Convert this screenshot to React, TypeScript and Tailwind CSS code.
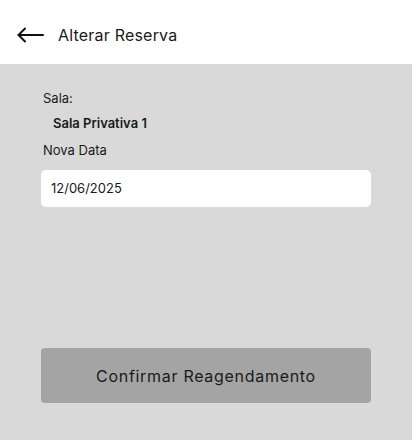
const font = { fontFamily: "Inter, 'Noto Sans', sans-serif" }

export default function App() {
  return (
    <div className="flex flex-col w-[412px] h-[440px] bg-[#d9d9d9] text-[#1a1a1a]" style={font}>
      <header className="flex items-center h-16 bg-white pl-[17px] pt-[6px] gap-[14px]">
        <svg width="27" height="16" viewBox="0 0 27 16" fill="none" stroke="#111" strokeWidth="2" strokeLinecap="round" strokeLinejoin="round">
          <path d="M26 8H1.5" />
          <path d="M8 1.5L1.5 8L8 14.5" />
        </svg>
        <h1 className="text-[16px] font-normal tracking-[0.2px]">Alterar Reserva</h1>
      </header>

      <main className="flex flex-col flex-1 px-[41px] pt-[26px] pb-[37px]">
        <span className="pl-[2px] text-[13px] leading-[16px]">Sala:</span>
        <span className="pl-[12px] mt-[9px] text-[13px] leading-[16px] font-semibold">
          Sala Privativa 1
        </span>
        <label className="pl-[2px] mt-[11px] text-[13px] leading-[16px]">Nova Data</label>
        <div className="mt-[12px] h-[37px] flex items-center bg-white rounded-[5px] px-[10px] text-[13px]">
          12/06/2025
        </div>

        <button className="mt-auto h-[55px] w-full rounded-[4px] bg-[#a4a4a4] text-[16px] tracking-[0.7px]">
          Confirmar Reagendamento
        </button>
      </main>
    </div>
  )
}
